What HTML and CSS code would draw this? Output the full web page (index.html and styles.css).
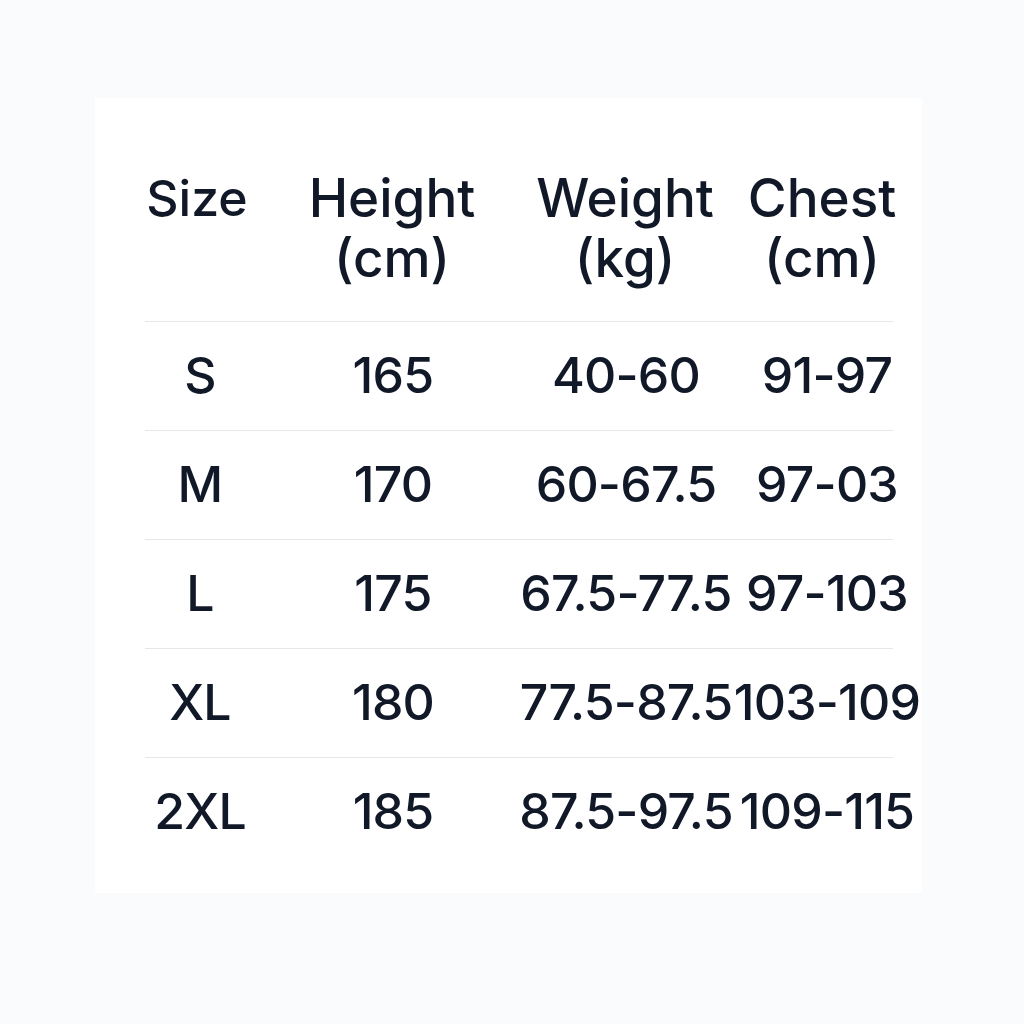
FILE: index.html
```html
<!DOCTYPE html>
<html lang="en">
<head>
<meta charset="utf-8">
<title>Size chart</title>
<link rel="stylesheet" href="styles.css">
</head>
<body>
<div class="card">
  <div class="table">
    <div class="row head">
      <div class="cell c1">Size</div>
      <div class="cell c2">Height<br>(cm)</div>
      <div class="cell c3">Weight<br>(kg)</div>
      <div class="cell c4">Chest<br>(cm)</div>
    </div>
    <div class="row">
      <div class="cell c1">S</div>
      <div class="cell c2">165</div>
      <div class="cell c3">40-60</div>
      <div class="cell c4">91-97</div>
    </div>
    <div class="row">
      <div class="cell c1">M</div>
      <div class="cell c2">170</div>
      <div class="cell c3">60-67.5</div>
      <div class="cell c4">97-03</div>
    </div>
    <div class="row">
      <div class="cell c1">L</div>
      <div class="cell c2">175</div>
      <div class="cell c3">67.5-77.5</div>
      <div class="cell c4">97-103</div>
    </div>
    <div class="row">
      <div class="cell c1">XL</div>
      <div class="cell c2">180</div>
      <div class="cell c3">77.5-87.5</div>
      <div class="cell c4">103-109</div>
    </div>
    <div class="row last">
      <div class="cell c1">2XL</div>
      <div class="cell c2">185</div>
      <div class="cell c3">87.5-97.5</div>
      <div class="cell c4">109-115</div>
    </div>
  </div>
</div>
</body>
</html>
```

FILE: styles.css
```css
html, body {
  margin: 0;
  padding: 0;
  background: #fafbfd;
}
body {
  width: 1024px;
  height: 1024px;
  padding-top: 98px;
  box-sizing: border-box;
  font-family: "Inter", "Roboto", "Liberation Sans", sans-serif;
  font-weight: 500;
  color: #111827;
}
.card {
  margin-left: 95px;
  width: 827px;
  height: 795px;
  background: #ffffff;
  box-sizing: border-box;
  padding: 70px 0 0 50px;
}
.table {
  width: 748px;
}
.row {
  display: flex;
  width: 748px;
  border-bottom: 1px solid #e5e7eb;
  padding: 23px 0 24px;
  font-size: 50px;
  line-height: 61px;
  letter-spacing: -0.8px;
}
.row.head {
  padding: 0 0 33px;
  font-size: 53px;
  line-height: 60px;
  letter-spacing: 0;
}
.row.last {
  border-bottom: none;
}
.cell {
  flex-shrink: 0;
  text-align: center;
  white-space: nowrap;
}
.c1 { width: 110px; }
.c2 { width: 276px; }
.c3 { width: 190px; display: flex; justify-content: center; }
.c4 { width: 212px; display: flex; justify-content: center; }
.head .c1 { width: 104px; font-size: 50px; }
.head .c2 { width: 286px; }
.head .c3 { width: 180px; }
.head .c3, .head .c4 { display: block; }
.head .c4 { width: 214px; }
```
